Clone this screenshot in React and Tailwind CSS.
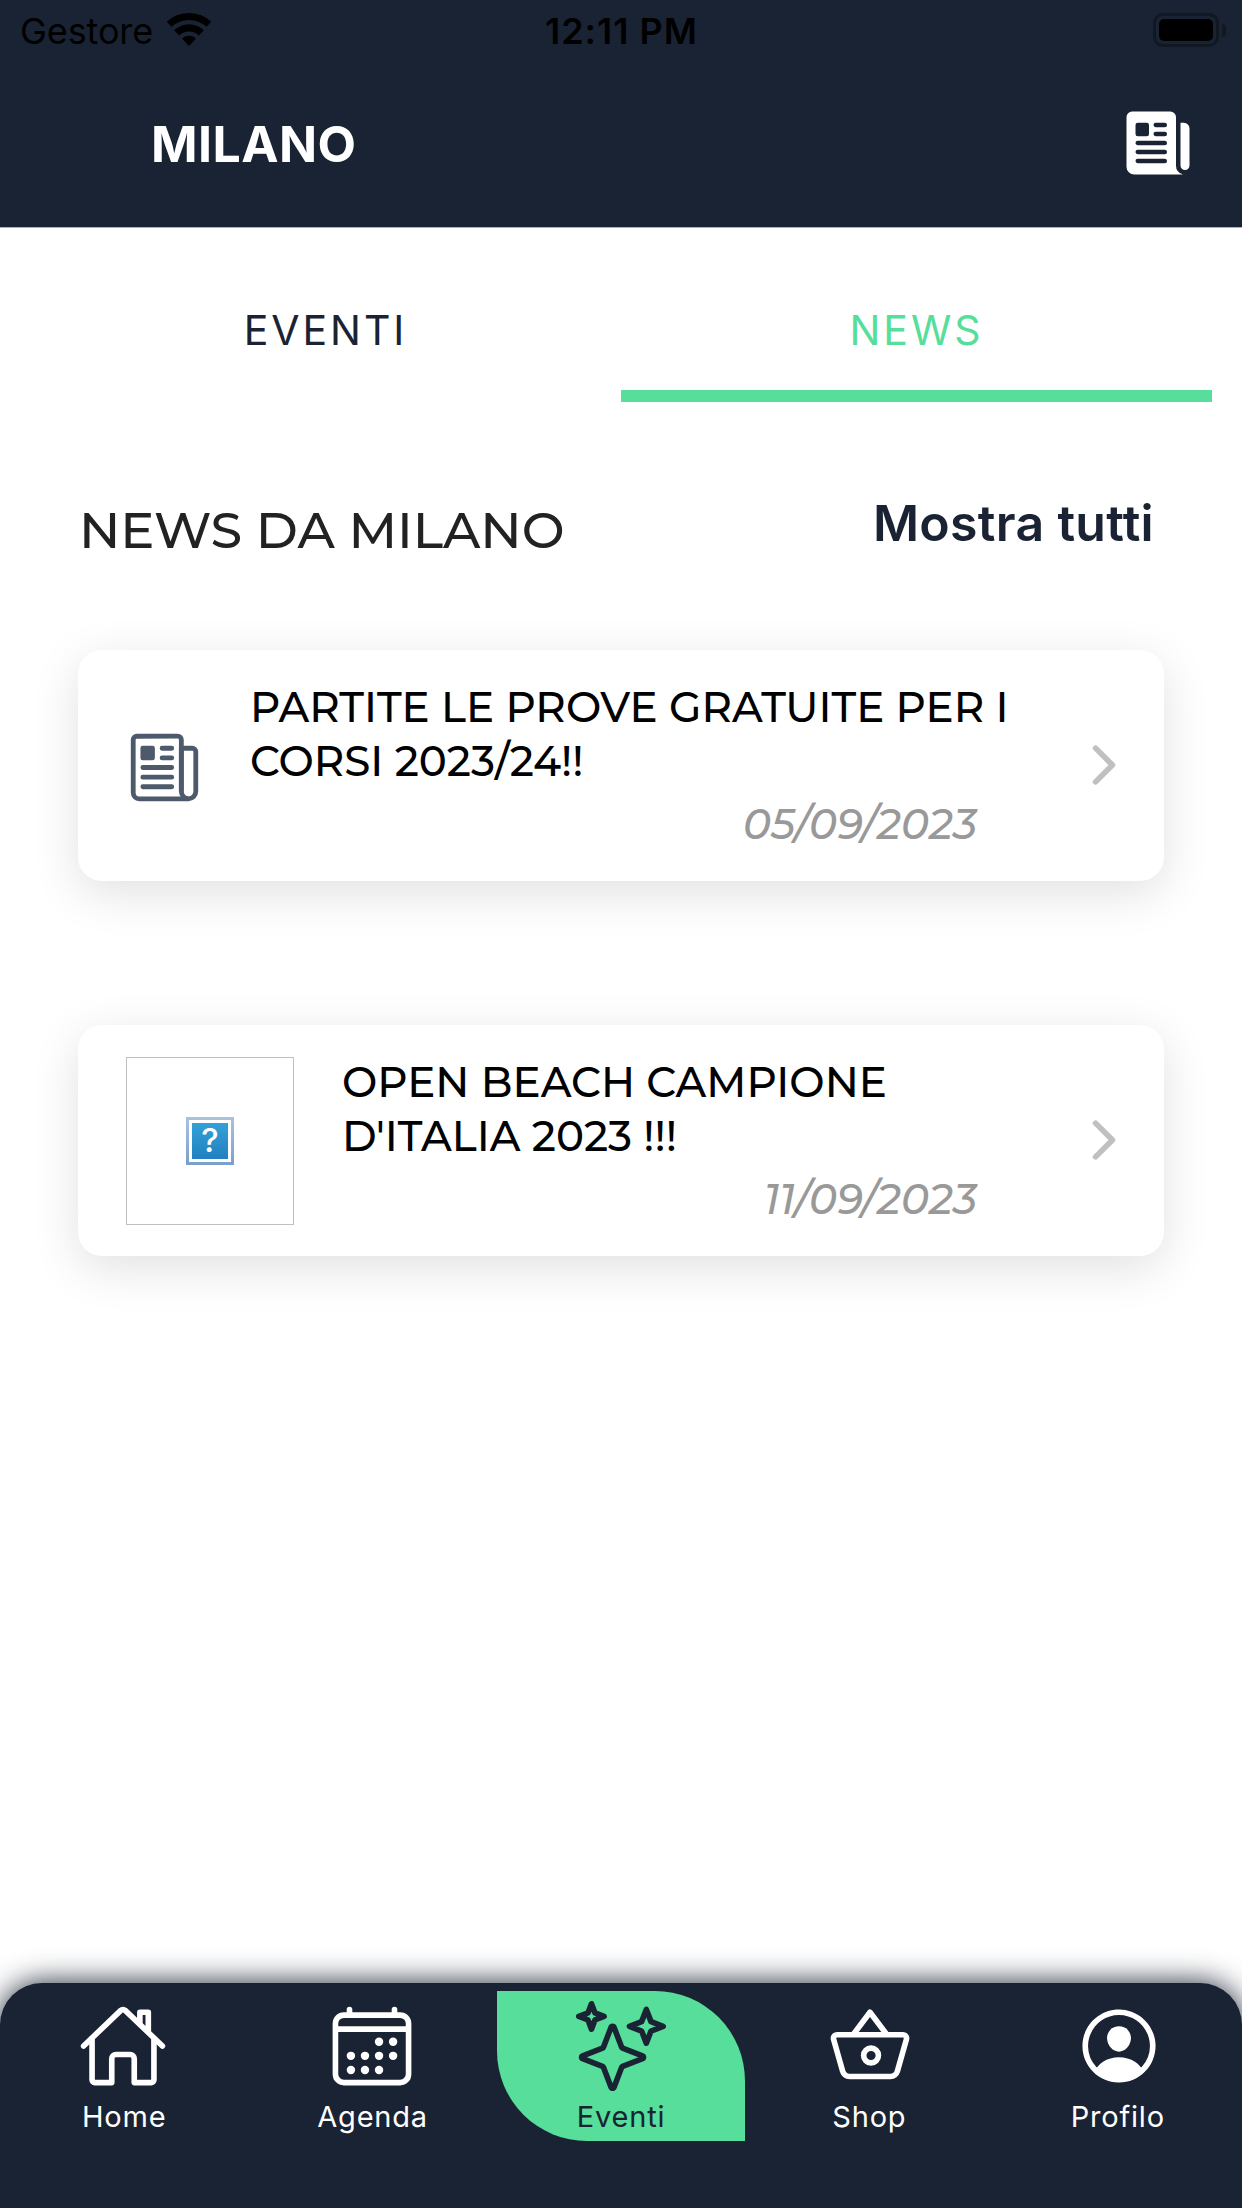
import React from 'react';
import {
  IoNewspaper,
  IoNewspaperOutline,
  IoChevronForward,
  IoHomeOutline,
  IoCalendarOutline,
  IoSparklesOutline,
  IoBasketOutline,
  IoPersonCircleOutline,
} from 'react-icons/io5';

function WifiIcon() {
  return (
    <svg width="44" height="33" viewBox="0 0 44 33" fill="none" stroke="#000">
      <path d="M2.2 11.3a29 29 0 0 1 39.6 0" strokeWidth="7" />
      <path d="M9.7 19.9a17.6 17.6 0 0 1 24.6 0" strokeWidth="7.2" />
      <path d="M22 31.5 16.4 25.6a9 9 0 0 1 11.2 0Z" fill="#000" strokeWidth="2" strokeLinejoin="round" />
    </svg>
  );
}

function Battery() {
  return (
    <div className="flex items-center gap-[3px]">
      <div className="h-[34px] w-[66px] rounded-[10px] border-[3px] border-[#111822] p-[3px]">
        <div className="h-full w-full rounded-[5px] bg-black" />
      </div>
      <div className="h-[13px] w-1 rounded-r-full bg-[#111822]" />
    </div>
  );
}

function StatusBar() {
  return (
    <div className="grid h-[60px] grid-cols-3 items-start pl-[18px] pr-4 text-[36px] leading-[62px] text-black">
      <div className="flex items-start gap-[14px] pl-0.5">
        <span className="tracking-[-0.1px]">Gestore</span>
        <span className="pt-[13px]">
          <WifiIcon />
        </span>
      </div>
      <div className="pr-px text-center font-semibold tracking-[1px]">12:11 PM</div>
      <div className="flex justify-end pt-[13px]">
        <Battery />
      </div>
    </div>
  );
}

function MissingImage() {
  return (
    <div className="flex h-[168px] w-[168px] items-center justify-center border border-[#c0c0c0]">
      <div className="h-12 w-12 bg-linear-to-b from-[#a8c3e0] to-[#7a9fcc] p-[3px]">
        <div className="h-full w-full bg-white p-[3px]">
          <div className="flex h-full w-full items-center justify-center bg-linear-to-b from-[#34a1d8] to-[#2180c0] text-[33px] font-medium leading-none text-white">
            ?
          </div>
        </div>
      </div>
    </div>
  );
}

function NewsCard({ media, mediaClass, lines, date }) {
  return (
    <article className="flex h-[231px] items-center rounded-[24px] bg-white pr-[30px] shadow-[0_12px_48px_rgba(0,0,0,0.12)]">
      <div className={mediaClass}>{media}</div>
      <div className="flex h-full grow flex-col whitespace-nowrap pt-[30px] font-[Montserrat,Inter,sans-serif] text-[42px] font-medium leading-[54px]">
        <h3 className="text-black">
          {lines[0]}
          <br />
          {lines[1]}
        </h3>
        <p className="mt-[9px] pr-[97px] text-right italic text-[#999]">{date}</p>
      </div>
      <IoChevronForward className="mb-0.5 h-[60px] w-[60px] shrink-0 text-[#c0c0c0]" />
    </article>
  );
}

const tabs = [
  { label: 'Home', Icon: IoHomeOutline, iconClass: 'mr-0.5 h-[90px] w-[90px]' },
  { label: 'Agenda', Icon: IoCalendarOutline, iconClass: 'mr-0.5 h-[90px] w-[90px]' },
  { label: 'Eventi', Icon: IoSparklesOutline, iconClass: 'h-[90px] w-[90px]', active: true },
  { label: 'Shop', Icon: IoBasketOutline, iconClass: 'ml-0.5 h-[90px] w-[90px]' },
  { label: 'Profilo', Icon: IoPersonCircleOutline, iconClass: 'ml-0.5 h-[90px] w-[90px]' },
];

function TabBar() {
  return (
    <nav className="grid h-[225px] grid-cols-5 rounded-t-[42px] bg-[#1a2333] pt-2 shadow-[0_0_30px_#1a2333]">
      {tabs.map(({ label, Icon, iconClass, active }) => (
        <div
          key={label}
          className={
            active
              ? 'flex h-[150px] flex-col items-center rounded-tr-[90px] rounded-bl-[90px] bg-[#56de9a] pt-[10px] text-[#1a2333]'
              : 'flex h-[150px] flex-col items-center pt-[10px] text-white'
          }
        >
          <Icon className={iconClass} />
          <span className="mt-[11px] text-[29px] leading-[30px] tracking-[0.8px]">{label}</span>
        </div>
      ))}
    </nav>
  );
}

export default function App() {
  return (
    <div className="flex h-[2208px] w-[1242px] flex-col overflow-hidden bg-white font-[Inter,sans-serif]">
      <header className="h-[228px] border-b border-[#a9b3ba] bg-[#1a2333]">
        <StatusBar />
        <div className="flex h-[167px] items-center justify-between pl-[151px] pr-[48px] text-white">
          <h1 className="pt-0.5 text-[50px] font-bold tracking-[0.45px]">MILANO</h1>
          <IoNewspaper className="mb-0.5 h-[72px] w-[72px]" />
        </div>
      </header>

      <main className="grow">
        <div className="mx-[30px] mt-[30px] grid h-[144px] grid-cols-2 text-center text-[41px] leading-[144px] tracking-[2.9px]">
          <div className="h-[144px] text-[#1a2333]">EVENTI</div>
          <div className="h-[144px] border-b-12 border-[#56de9a] text-[#56de9a]">NEWS</div>
        </div>

        <div className="mt-[72px] flex h-[112px] justify-between pl-[79px] pr-[88px] leading-[112px]">
          <h2 className="font-[Montserrat,Inter,sans-serif] text-[51px] font-medium tracking-[-0.05px] text-[#222]">
            NEWS DA MILANO
          </h2>
          <a className="-mt-[7px] text-[50px] font-semibold tracking-[0.3px] text-[#1a2333]">Mostra tutti</a>
        </div>

        <div className="mx-[78px] mt-16 flex flex-col gap-[144px]">
          <NewsCard
            media={<IoNewspaperOutline className="h-[77px] w-[77px] text-[#4d5a6b]" />}
            mediaClass="pl-12 pr-[47px] pt-[3px]"
            lines={['PARTITE LE PROVE GRATUITE PER I', 'CORSI 2023/24!!']}
            date="05/09/2023"
          />
          <NewsCard
            media={<MissingImage />}
            mediaClass="pl-12 pr-12"
            lines={['OPEN BEACH CAMPIONE', "D'ITALIA 2023 !!!"]}
            date="11/09/2023"
          />
        </div>
      </main>

      <TabBar />
    </div>
  );
}
